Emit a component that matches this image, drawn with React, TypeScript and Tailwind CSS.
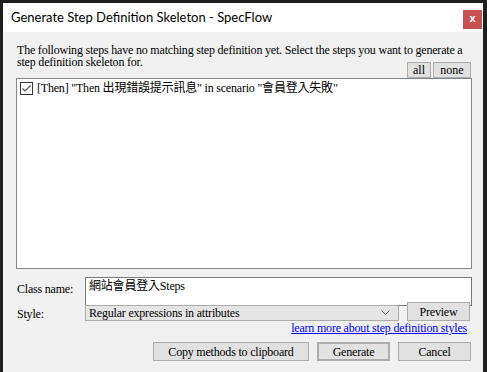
import React from "react";

const serif = { fontFamily: '"Liberation Serif", "Noto Sans CJK TC", serif' };

function WinButton({ children, className = "" }: { children: React.ReactNode; className?: string }) {
  return (
    <div
      className={`flex items-center justify-center bg-[#e1e1e1] border border-[#adadad] text-[12px] leading-none text-black ${className}`}
    >
      {children}
    </div>
  );
}

export default function App() {
  return (
    <div className="w-[487px] h-[372px] bg-[#1f1f1f] pl-[3px] pt-[3px] pr-[4px] flex overflow-hidden">
      <div className="flex-1 flex flex-col bg-[#f0f0f0]">
        {/* title bar */}
        <div className="h-[29px] shrink-0 bg-white flex items-start justify-between">
          <div
            className="pl-[8px] pt-[5px] text-[13px] leading-[18px] text-black"
            style={{ fontFamily: 'Lato, "Noto Sans", sans-serif' }}
          >
            Generate Step Definition Skeleton - SpecFlow
          </div>
          <div className="mt-[7px] mr-[1px] w-[19px] h-[19px] bg-[#c75050] text-white text-[11px] font-bold flex items-center justify-center leading-none pb-[2px]"
            style={{ fontFamily: '"Liberation Sans", sans-serif' }}>
            x
          </div>
        </div>

        <div className="flex-1 flex flex-col pl-[13px] pr-[11px] text-black tracking-[-0.2px]" style={serif}>
          <div className="mt-[13px] pl-[1px] h-[12px] text-[12px] leading-[11px] whitespace-nowrap">
            The following steps have no matching step definition yet. Select the steps you want to generate a
          </div>
          <div className="flex items-start justify-between h-[21px]">
            <span className="pl-[1px] text-[12px] leading-[11px] whitespace-nowrap">step definition skeleton for.</span>
            <div className="flex gap-[2px] mt-[5px] pr-[1px] tracking-normal">
              <WinButton className="w-[24px] h-[16px]">all</WinButton>
              <WinButton className="w-[38px] h-[16px]">none</WinButton>
            </div>
          </div>

          {/* step list */}
          <div className="h-[191px] shrink-0 bg-white border border-[#828790] p-[2px]">
            <div className="flex items-center gap-[4px] pl-[1px] text-[12px] leading-[14px]">
              <div className="w-[13px] h-[13px] border border-[#333333] bg-white flex items-center justify-center">
                <svg width="11" height="11" viewBox="0 0 11 11">
                  <path d="M1.5 5.5 L4 8 L9.5 2.5" fill="none" stroke="#555555" strokeWidth="1.2" />
                </svg>
              </div>
              <span>[Then] "Then 出現錯誤提示訊息" in scenario "會員登入失敗"</span>
            </div>
          </div>

          {/* class name */}
          <div className="flex items-start mt-[8px]">
            <span className="w-[69px] pl-[1px] pt-[5px] text-[12px] leading-[14px]">Class name:</span>
            <div className="flex-1 h-[29px] bg-white border border-[#7a7a7a] px-[3px] pt-[1px] text-[12px] leading-[15px]">
              網站會員登入Steps
            </div>
          </div>

          {/* style */}
          <div className="flex items-start">
            <span className="w-[69px] pl-[1px] pt-[1px] text-[12px] leading-[14px]">Style:</span>
            <div className="w-[314px] h-[16px] mt-[-1px] bg-[#e5e5e5] border border-[#acacac] flex items-center justify-between pl-[3px] pr-[8px] text-[12px] leading-none">
              <span>Regular expressions in attributes</span>
              <svg width="9" height="6" viewBox="0 0 9 6">
                <path d="M0.5 0.5 L4.5 4.5 L8.5 0.5" fill="none" stroke="#606060" strokeWidth="1" />
              </svg>
            </div>
            <WinButton className="ml-[8px] mt-[-4px] w-[63px] h-[19px] relative">Preview</WinButton>
          </div>

          <div className="flex justify-end pr-[5px] mt-[1px]">
            <span className="text-[12px] leading-[13px] text-[#0000ff] underline">
              learn more about step definition styles
            </span>
          </div>

          <div className="flex justify-end gap-[8px] mt-[7px] pr-[1px]">
            <WinButton className="w-[156px] h-[19px]">Copy methods to clipboard</WinButton>
            <WinButton className="w-[73px] h-[19px] border-2 border-[#0078d7]">Generate</WinButton>
            <WinButton className="w-[73px] h-[19px]">Cancel</WinButton>
          </div>
        </div>
      </div>
    </div>
  );
}
